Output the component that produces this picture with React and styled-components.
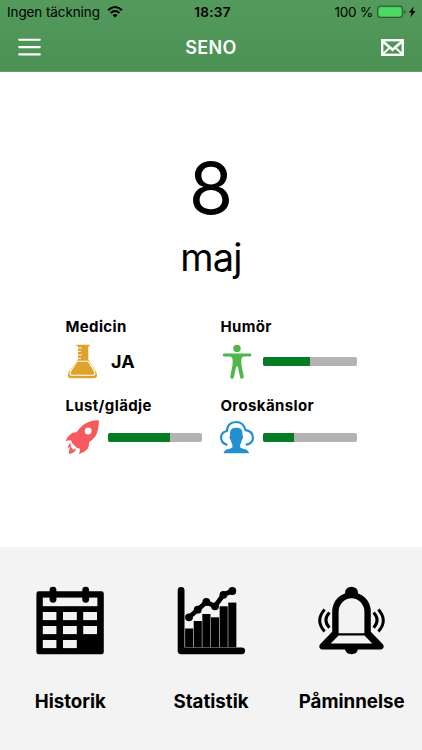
import styled, { createGlobalStyle } from "styled-components";

const GlobalStyle = createGlobalStyle`
  * {
    box-sizing: border-box;
  }

  body {
    margin: 0;
    background-color: #ffffff;
    font-family: Inter, "Liberation Sans", sans-serif;
    color: #000000;
  }

  svg {
    display: block;
    flex-shrink: 0;
    overflow: visible;
  }
`;

const Screen = styled.div`
  display: flex;
  flex-direction: column;
  width: 100%;
  height: 100vh;
  min-height: 750px;
  overflow: hidden;
`;

const Header = styled.header`
  height: 72px;
  background: linear-gradient(#539a5c, #4a9153);
  border-bottom: 1px solid #5f9c67;
`;

const StatusBar = styled.div`
  display: grid;
  grid-template-columns: 1fr auto 1fr;
  align-items: center;
  height: 24px;
  padding: 0 6px 0 7px;
  font-size: 13.5px;
  line-height: 24px;
  white-space: nowrap;
`;

const Carrier = styled.div`
  display: flex;
  align-items: center;
  gap: 7px;
  letter-spacing: -0.1px;
`;

const Clock = styled.time`
  padding-left: 2px;
  font-weight: 600;
  letter-spacing: 0.3px;
`;

const Power = styled.div`
  display: flex;
  align-items: center;
  justify-content: flex-end;
  gap: 4px;
  letter-spacing: -0.2px;
`;

const NavBar = styled.nav`
  display: grid;
  grid-template-columns: 1fr auto 1fr;
  align-items: center;
  height: 46px;
  padding: 0 18px;

  > svg:last-child {
    justify-self: end;
  }
`;

const Title = styled.h1`
  margin: 0;
  color: #ffffff;
  font-size: 18px;
  font-weight: 600;
  letter-spacing: 0.3px;
`;

const Today = styled.main`
  flex: 1;
  padding-top: 72px;
`;

const Day = styled.div`
  font-size: 72px;
  line-height: 88px;
  text-align: center;
`;

const Month = styled.div`
  font-size: 38px;
  line-height: 50px;
  letter-spacing: -0.8px;
  text-align: center;
`;

const Measures = styled.section`
  display: grid;
  grid-template-columns: 137px 137px;
  column-gap: 18px;
  row-gap: 18px;
  padding: 35px 0 0 65px;
`;

const Label = styled.h2`
  margin: 0 0 ${({ $gap }) => $gap}px 0.4px;
  font-size: 15px;
  font-weight: 700;
  line-height: 20px;
  letter-spacing: 0.38px;
`;

const Reading = styled.div`
  display: flex;
  align-items: center;
  gap: 9px;
`;

const Answer = styled.strong`
  padding: 1px 0 0 3px;
  font-size: 18px;
  font-weight: 700;
  line-height: 33px;
`;

const Track = styled.div`
  width: 94px;
  height: 9px;
  border-radius: 2px;
  background-color: #b3b3b3;
  overflow: hidden;
`;

const Fill = styled.div`
  height: 100%;
  background-color: #067c22;
`;

const Footer = styled.footer`
  display: grid;
  grid-template-columns: repeat(3, 1fr);
  height: 203px;
  padding-top: 40px;
  background-color: #f3f3f3;
`;

const MenuItem = styled.a`
  display: flex;
  flex-direction: column;
  align-items: center;
  gap: 35px;
  font-size: 18.7px;
  font-weight: 700;
  line-height: 24px;
`;

const WifiIcon = () => (
  <svg width="16" height="12" viewBox="0 0 16 12" fill="none" stroke="#000">
    <path d="M1 4.2Q8-2.2 15 4.2" strokeWidth="2.1" />
    <path d="M3.6 7Q8 3 12.4 7" strokeWidth="2" />
    <path d="M5.6 9.2Q8 7 10.4 9.2L8 11.6Z" fill="#000" stroke="none" />
  </svg>
);

const BatteryIcon = () => (
  <svg width="39" height="14" viewBox="0 0 39 14">
    <rect x="0.6" y="1.1" width="25" height="11.4" rx="3" fill="none" stroke="#2b6535" strokeWidth="1.1" />
    <rect x="1.8" y="2.3" width="22.6" height="9" rx="1.8" fill="#4cd964" />
    <path d="M27 5v4q1.6-.5 1.6-2T27 5Z" fill="#2b6535" />
    <path d="M36.6 1.6L32 7.5h2.6l-1 4.8 4.9-6.3h-2.8Z" />
  </svg>
);

const MenuIcon = () => (
  <svg width="23" height="18" viewBox="0 0 23 18" stroke="#fff" strokeWidth="2.1" strokeLinecap="round">
    <path d="M1.2 1.8h20.6M1.2 9.1h20.6M1.2 16.4h20.6" />
  </svg>
);

const MailIcon = () => (
  <svg width="23" height="17" viewBox="0 0 23 17" fill="none" stroke="#fff">
    <rect x="1.2" y="1.2" width="20.6" height="14.6" strokeWidth="2.4" />
    <path d="M2 2.4l9.5 8.4L21 2.4" strokeWidth="2.7" />
    <path d="M2 15l6.6-6.4M21 15l-6.6-6.4" strokeWidth="2" />
  </svg>
);

const FlaskIcon = () => (
  <svg width="34" height="34" viewBox="0 0 34 34">
    <path
      d="M11.3.7h13.4v1.2l-1.4.7v12.6L31.2 28Q33.6 34.3 28.6 34.3H6.2Q1.2 34.3 3.6 28L13 15.2V2.6l-1.7-.7Z"
      fill="#dfa32c"
    />
    <path d="M13 4h4M13 7.5h3M13 11h4M13 14.4h3" stroke="#fff" strokeWidth="0.9" />
    <path
      d="M13 17.3h9.4q1 0 1.6 1l5.4 8.8q1.8 4.2-1.6 4.2H7.2q-3.4 0-1.6-4.2l5.8-8.8q.6-1 1.6-1Z"
      fill="none"
      stroke="#fff"
      strokeWidth="1.1"
    />
  </svg>
);

const PersonIcon = () => (
  <svg width="34" height="34" viewBox="0 0 34 34" fill="#4db748">
    <circle cx="17" cy="4.4" r="3.7" />
    <path d="M4.1 9.6h25.8a1.4 1.4 0 0 1 0 2.8h-6.2q-2.2.4-2.3 2.8v5.4l2.3 12a1.6 1.6 0 0 1-3.5.8l-2.4-10.8h-1.6l-2.4 10.8a1.6 1.6 0 0 1-3.5-.8l2.3-12v-5.4q-.1-2.4-2.3-2.8H4.1a1.4 1.4 0 0 1 0-2.8Z" />
  </svg>
);

const RocketIcon = () => (
  <svg width="34" height="34" viewBox="0 0 34 34" fill="#f9595c">
    <path d="M34 .3Q24 .2 17.5 5.6 14.5 8.3 11.6 12.2 8 12 5.4 14.2 2 17.2.5 21.2q3-1.2 5.6-1l1.3 3.2 4.4 4.4 3.1 1q.4 2.4-1 5.2 5.4-1.4 8.4-4.8 2.2-2.8 1.8-7 3.6-2.6 6-5.4Q33.8 11 34 .3Z" />
    <path d="M5.6 23Q2.8 24.3 3.2 28q1.6-.4 2.2-1.2Q3.4 30.4 4 34q6.8-1.4 7.2-5.8-1.6 1.6-3.3 1.2Q5.2 27 5.6 23Z" />
    <circle cx="23.2" cy="11" r="3.4" fill="#fff" />
  </svg>
);

const WorryIcon = () => (
  <svg width="34" height="34" viewBox="0 0 34 34" fill="#228fd0">
    <path
      d="M6.6 24.6Q1.1 23.2 1.1 17.6q0-5.2 5.7-6.6Q7.6 2 16.2 2q7.2 0 9.4 8.2 7.3 1.4 7.3 7.2 0 5.8-6.3 7.2"
      fill="none"
      stroke="#228fd0"
      strokeWidth="2.2"
      strokeLinecap="round"
    />
    <path d="M16.3 7.8c5 0 6.6 2.4 6.2 7.6 1 1.4.5 3.2-.6 4.4-.3 2-.9 3.4-1.7 4.6v2.8c1 1.2 3.2 1.5 5 2 2 .6 3.4 1.9 3.8 4.1H3.6c.4-2.2 1.8-3.5 3.8-4.1 1.8-.5 4-.8 5-2v-2.8c-.8-1.2-1.4-2.6-1.7-4.6-1.1-1.2-1.6-3-.6-4.4-.4-5.2 1.2-7.6 6.2-7.6Z" />
  </svg>
);

const CalendarIcon = () => (
  <svg width="70" height="68" viewBox="0 0 70 68">
    <rect x="1.4" y="4.3" width="67.4" height="63" rx="2.4" />
    <g fill="#f3f3f3">
      <rect x="7.8" y="10.6" width="54.6" height="8.6" />
      {[25, 39, 53].map((y) => (
        <g key={y}>
          <rect x="7.8" y={y} width="13.6" height="8.1" />
          <rect x="28" y={y} width="13.8" height="8.1" />
          {y < 53 && <rect x="48.2" y={y} width="13.8" height="8.1" />}
        </g>
      ))}
    </g>
    <rect x="14.6" y="-0.3" width="6.8" height="16" rx="3.4" />
    <rect x="47.3" y="-0.3" width="6.8" height="16" rx="3.4" />
  </svg>
);

const trend = [
  [13, 30.3],
  [21.7, 22.7],
  [30.3, 15],
  [39, 19.3],
  [47.4, 7.8],
  [56.3, 4],
];
const barTops = [41.5, 34, 27, 30.3, 19.3, 15.6];

const ChartIcon = () => (
  <svg width="70" height="68" viewBox="0 0 70 68">
    <path
      d="M5.1 3.4v60.4h60.6"
      fill="none"
      stroke="#000"
      strokeWidth="6.8"
      strokeLinecap="round"
      strokeLinejoin="round"
    />
    {barTops.map((top, i) => (
      <rect key={i} x={9.1 + i * 8.63} y={top} width="8.1" height={60.3 - top} />
    ))}
    <polyline points={trend.join(" ")} fill="none" stroke="#000" strokeWidth="4.8" />
    {trend.map(([x, y]) => (
      <circle key={x} cx={x} cy={y} r="3.9" />
    ))}
  </svg>
);

const BellIcon = () => (
  <svg width="70" height="68" viewBox="0 0 70 68">
    <ellipse cx="34.5" cy="5.2" rx="6.4" ry="5.5" />
    <path
      fillRule="evenodd"
      d="M34.5 5.2a19.3 19.3 0 0 1 19.3 19.3v20.3l12.1 12.4q2.2 3.4-1.4 5.4H4.5q-3.6-2-1.4-5.4l12.1-12.4V24.5A19.3 19.3 0 0 1 34.5 5.2ZM34.5 11.2a12.9 13.6 0 0 0-12.9 13.6v21.4h25.8V24.8a12.9 13.6 0 0 0-12.9-13.6ZM21.5 48.6l-7.8 7.8h41.6l-7.8-7.8Z"
    />
    <path d="M28 62q.8 5.2 6.5 5.2T41 62Z" />
    <path
      d="M12.4 25.6q-7 7.8 0 15.2M7.6 22.6q-9.8 11 0 22M56.6 25.6q7 7.8 0 15.2M61.4 22.6q9.8 11 0 22"
      fill="none"
      stroke="#000"
      strokeWidth="3"
    />
  </svg>
);

const measures = [
  { label: "Medicin", icon: <FlaskIcon />, answer: "JA", gap: 7 },
  { label: "Humör", icon: <PersonIcon />, value: 50, gap: 7 },
  { label: "Lust/glädje", icon: <RocketIcon />, value: 66, gap: 4 },
  { label: "Oroskänslor", icon: <WorryIcon />, value: 33, gap: 4 },
];

const menu = [
  { label: "Historik", icon: <CalendarIcon /> },
  { label: "Statistik", icon: <ChartIcon /> },
  { label: "Påminnelse", icon: <BellIcon /> },
];

function App() {
  return (
    <>
      <GlobalStyle />
      <Screen>
        <Header>
          <StatusBar>
            <Carrier>
              Ingen täckning
              <WifiIcon />
            </Carrier>
            <Clock>18:37</Clock>
            <Power>
              100 %
              <BatteryIcon />
            </Power>
          </StatusBar>
          <NavBar>
            <MenuIcon />
            <Title>SENO</Title>
            <MailIcon />
          </NavBar>
        </Header>
        <Today>
          <Day>8</Day>
          <Month>maj</Month>
          <Measures>
            {measures.map(({ label, icon, answer, value, gap }) => (
              <div key={label}>
                <Label $gap={gap}>{label}</Label>
                <Reading>
                  {icon}
                  {answer ? (
                    <Answer>{answer}</Answer>
                  ) : (
                    <Track>
                      <Fill style={{ width: `${value}%` }} />
                    </Track>
                  )}
                </Reading>
              </div>
            ))}
          </Measures>
        </Today>
        <Footer>
          {menu.map(({ label, icon }) => (
            <MenuItem key={label}>
              {icon}
              {label}
            </MenuItem>
          ))}
        </Footer>
      </Screen>
    </>
  );
}

export default App;
